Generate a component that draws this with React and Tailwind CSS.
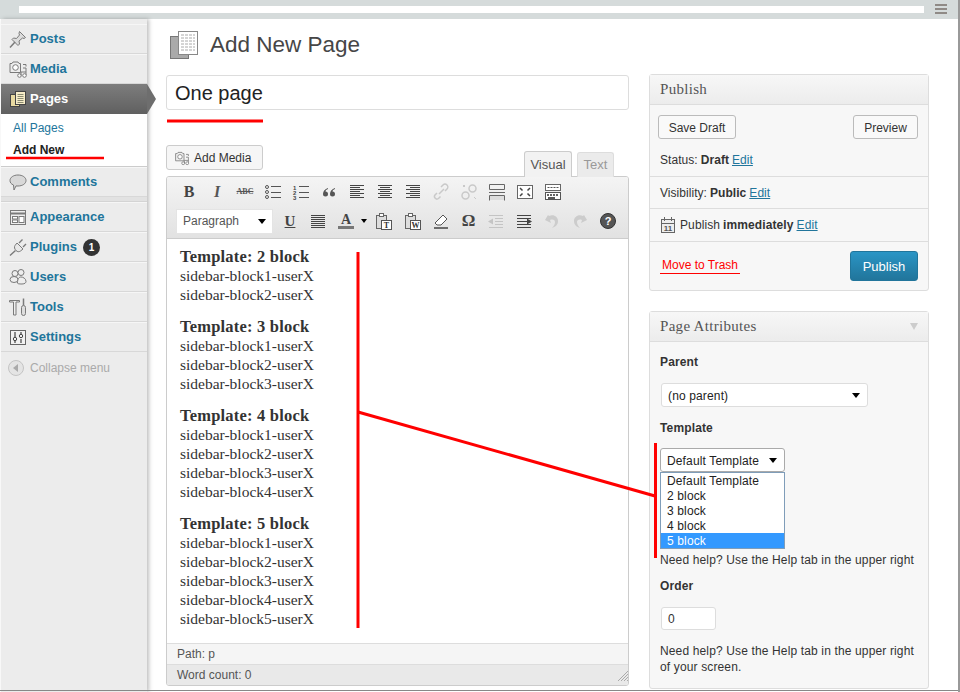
const sans = "font-['Liberation_Sans',Arial,sans-serif]"

function Glyph({ size = 20, children, className = "" }) {
  return (
    <svg width={size} height={size} viewBox="0 0 20 20" fill="none" className={`shrink-0 ${className}`}>
      {children}
    </svg>
  )
}

const gray = "#7a7a7a"

const PinIcon = () => (
  <Glyph>
    <path d="M11.500 2.500l6 6-1.500 1-1.500-.5-3.500 3 .5 3-1.500 1.500-6-6L5.500 9l3 .5 3-3.500-.5-1.500z" fill="#dcdcdc" stroke={gray} />
    <path d="M7 13l-5 5.500" stroke={gray} strokeWidth="1.500" />
  </Glyph>
)

const MediaIcon = ({ size = 20 }) => (
  <Glyph size={size}>
    <path d="M2 4.500h2l1-1.500h5l1 1.500h1.500v9H2z" fill="#eee" stroke={gray} />
    <circle cx="7.500" cy="8.500" r="2.800" fill="#fff" stroke={gray} />
    <path d="M15 5.500h3v2M15 9h3M18 9v7" stroke={gray} />
    <circle cx="11.500" cy="16.500" r="1.800" fill="#fff" stroke={gray} />
    <circle cx="16.500" cy="16.500" r="1.800" fill="#fff" stroke={gray} />
    <path d="M13 16.500V13h5" stroke={gray} />
  </Glyph>
)

const PagesIcon = () => (
  <Glyph>
    <rect x="2.500" y="5.500" width="9" height="12" fill="#e8d9a0" stroke="#444" />
    <rect x="7.500" y="2.500" width="10" height="13" fill="#f7edc8" stroke="#444" />
    <path d="M9.500 5.500h6M9.500 7.500h6M9.500 9.500h6M9.500 11.500h6M9.500 13.500h6" stroke="#8a8a70" />
  </Glyph>
)

const CommentIcon = () => (
  <Glyph>
    <path d="M10 3c4.500 0 8 2.300 8 5.500S14.500 14 10 14c-.8 0-1.300 0-2-.1L6 18l-.5-5C3 12 2 10.500 2 8.500 2 5.300 5.500 3 10 3z" fill="#d8d8d8" stroke={gray} />
  </Glyph>
)

const AppearanceIcon = () => (
  <Glyph>
    <rect x="2.500" y="3.500" width="15" height="14" fill="#eee" stroke={gray} />
    <path d="M2.500 6.500h15" stroke={gray} strokeWidth="2" />
    <rect x="4.500" y="9.500" width="5" height="2.500" fill="#fff" stroke={gray} />
    <rect x="4.500" y="13" width="5" height="2.500" fill="#fff" stroke={gray} />
    <rect x="11" y="9.500" width="5" height="6" fill="#fff" stroke={gray} />
  </Glyph>
)

const PluginsIcon = () => (
  <Glyph>
    <path d="M9 6l6 6-2.500 2c-1.500 1-3 1-4.500-.5S6 10 7 8.500z" fill="#e8e8e8" stroke={gray} />
    <path d="M11 6l3.500-3.500M15 10l3-3M7.500 13.500L2 18.500" stroke={gray} strokeWidth="1.400" />
  </Glyph>
)

const UsersIcon = () => (
  <Glyph>
    <circle cx="7" cy="6.500" r="3" fill="#eee" stroke={gray} />
    <circle cx="13" cy="5.500" r="3" fill="#eee" stroke={gray} />
    <ellipse cx="6" cy="12.500" rx="4" ry="3" fill="#eee" stroke={gray} />
    <path d="M9.500 16c0-4 1.500-6 3.500-6s5 1.500 5 4.500c0 1-1 2.500-4 2.500s-4.500-.2-4.500-1z" fill="#eee" stroke={gray} />
  </Glyph>
)

const ToolsIcon = () => (
  <Glyph>
    <path d="M1.500 3.500h10v1.500h-3.500v13h-2.500V5h-4z" fill="#eee" stroke={gray} />
    <path d="M15.500 1.500v7" stroke={gray} strokeWidth="1.500" />
    <rect x="13.500" y="8.500" width="4" height="10" rx="2" fill="#ddd" stroke={gray} />
  </Glyph>
)

const SettingsIcon = () => (
  <Glyph>
    <rect x="2.500" y="3.500" width="15" height="14" fill="#f2f2f2" stroke="#666" />
    <path d="M7 5v5M13 5v2M13 12v4M7 14v2" stroke="#444" strokeWidth="1.200" />
    <circle cx="7" cy="12" r="1.700" stroke="#444" />
    <circle cx="13" cy="9" r="1.700" stroke="#444" />
  </Glyph>
)

const menuTop = [
  { label: "Posts", icon: <PinIcon /> },
  { label: "Media", icon: <MediaIcon /> },
]

const menuBottom = [
  { label: "Appearance", icon: <AppearanceIcon /> },
  { label: "Plugins", icon: <PluginsIcon />, badge: "1" },
  { label: "Users", icon: <UsersIcon /> },
  { label: "Tools", icon: <ToolsIcon /> },
  { label: "Settings", icon: <SettingsIcon /> },
]

function MenuItem({ label, icon, badge }) {
  return (
    <div className="h-[30px] flex items-center pl-[7px] gap-[2px] border-b border-b-[#d8d8d8] border-t border-t-[#f6f6f6]">
      {icon}
      <span className="text-[13px] font-bold text-[#21759b]">{label}</span>
      {badge && (
        <span className="w-[17px] h-[17px] ml-[4px] rounded-full bg-[#333] text-white text-[10px] font-bold flex items-center justify-center">{badge}</span>
      )}
    </div>
  )
}

function Sidebar() {
  return (
    <aside className="w-[146px] shrink-0 ml-px bg-[#ececec] shadow-[2px_0_4px_rgba(0,0,0,0.25)] flex flex-col relative">
      <div className="h-[5px]" />
      {menuTop.map((m) => <MenuItem key={m.label} {...m} />)}
      <div className="h-[30px] flex items-center pl-[7px] gap-[2px] bg-gradient-to-b from-[#7d7d7d] to-[#606060] relative">
        <PagesIcon />
        <span className="text-[13px] font-bold text-white">Pages</span>
        <span className="absolute right-[-9px] top-0 w-0 h-0 border-y-[15px] border-y-transparent border-l-[9px] border-l-[#6e6e6e]" />
      </div>
      <div className="h-[53px] bg-white pl-[12px] pt-[6px] flex flex-col gap-[5px] text-[12px] leading-[17px] border-b border-[#ccc]">
        <span className="text-[#21759b]">All Pages</span>
        <span className="font-bold text-[#222]">Add New</span>
      </div>
      <MenuItem label="Comments" icon={<CommentIcon />} />
      <div className="h-[5px] border-b border-[#d4d4d4] bg-[#e2e2e2]" />
      {menuBottom.map((m) => <MenuItem key={m.label} {...m} />)}
      <div className="h-[31px] flex items-center pl-[7px] gap-[5px]">
        <span className="w-[16px] h-[16px] rounded-full bg-[#e4e4e4] border border-[#c4c4c4] flex items-center justify-center">
          <span className="w-0 h-0 border-y-[4px] border-y-transparent border-r-[5px] border-r-[#aaa] mr-px" />
        </span>
        <span className="text-[12px] text-[#aaa] ml-px">Collapse menu</span>
      </div>
    </aside>
  )
}

const tool = "#555"

function AlignIcon({ kind }) {
  const rows = [14, 10, 14, 10, 14, 10, 14]
  return (
    <Glyph>
      {rows.map((w, i) => {
        const x = kind === "left" ? 3 : kind === "center" ? 10 - w / 2 : 17 - w
        return <path key={i} d={`M${x} ${3.500 + i * 2}h${w}`} stroke="#444" />
      })}
    </Glyph>
  )
}

const toolbarRow1 = [
  <span key="b" className="font-['Liberation_Serif',serif] font-bold text-[16px] text-[#444]">B</span>,
  <span key="i" className="font-['Liberation_Serif',serif] italic font-bold text-[16px] text-[#555]">I</span>,
  <span key="abc" className="font-['Liberation_Serif',serif] font-bold text-[8px] text-[#555] line-through">ABC</span>,
  <Glyph key="ul"><circle cx="4" cy="5" r="1.500" stroke={tool} /><circle cx="4" cy="10" r="1.500" stroke={tool} /><circle cx="4" cy="15" r="1.500" stroke={tool} /><path d="M8 4.500h10M8 10.500h10M8 15.500h10" stroke={tool} /></Glyph>,
  <Glyph key="ol"><text x="2" y="8" fontSize="6" fontWeight="bold" fill="#444">1</text><text x="2" y="13" fontSize="6" fontWeight="bold" fill="#444">2</text><text x="2" y="18" fontSize="6" fontWeight="bold" fill="#444">3</text><path d="M8 4.500h10M8 10.500h10M8 15.500h10" stroke={tool} /></Glyph>,
  <Glyph key="q"><path d="M9 6C6 7 4 9 4 12a2.500 2.500 0 1 0 2.500-2.500c0-1 1-2 2.500-2.500zM16 6c-3 1-5 3-5 6a2.500 2.500 0 1 0 2.500-2.500c0-1 1-2 2.500-2.500z" fill="#555" /></Glyph>,
  <AlignIcon key="l" kind="left" />,
  <AlignIcon key="c" kind="center" />,
  <AlignIcon key="r" kind="right" />,
  <Glyph key="link"><path d="M8 12l5-5M6 11l-2 2a2.500 2.500 0 0 0 3.500 3.500l2-2M10 5l2-2a2.500 2.500 0 0 1 4 4l-2 2" stroke="#c9c9c9" strokeWidth="1.500" /></Glyph>,
  <Glyph key="unlink"><circle cx="13.500" cy="6.500" r="3.500" stroke="#c9c9c9" strokeWidth="1.500" /><circle cx="6.500" cy="13.500" r="3.500" stroke="#c9c9c9" strokeWidth="1.500" /><path d="M4 3l2 2M6 3L4 5M15 15l2 2" stroke="#c9c9c9" /></Glyph>,
  <Glyph key="more"><path d="M2.500 2.500h15v5h-15zM2 10.500h16M2.500 13.500h15v5M2.500 13.500v5" stroke="#666" /><rect x="3" y="14" width="14" height="4" fill="#ddd" /></Glyph>,
  <Glyph key="full"><rect x="2.500" y="3.500" width="15" height="13" fill="#fff" stroke="#666" /><path d="M5 6l2.500 2.500M15 6l-2.500 2.500M5 14l2.500-2.500M15 14l-2.500-2.500" stroke="#444" strokeWidth="1.500" /></Glyph>,
  <Glyph key="kitchen"><rect x="2.500" y="2.500" width="15" height="6" fill="#fff" stroke="#666" /><path d="M4.500 5.500h11" stroke="#555" strokeDasharray="2 1" /><rect x="2.500" y="10.500" width="15" height="7" fill="#fff" stroke="#555" /><path d="M4 13h12" stroke="#333" strokeWidth="1.500" strokeDasharray="2 1" /><path d="M5 16h7" stroke="#222" strokeWidth="1.500" /></Glyph>,
]

const Caret = ({ className = "border-x-[4px] border-t-[5px]" }) => (
  <span className={`w-0 h-0 border-x-transparent border-t-black ${className}`} />
)

function Cell({ children, w = "w-[28px]", className = "" }) {
  return <span className={`${w} h-[24px] shrink-0 flex items-center justify-center ${className}`}>{children}</span>
}

function Toolbar() {
  return (
    <div className="h-[62px] bg-gradient-to-b from-[#f4f4f4] to-[#e2e2e2] border-b border-[#ccc] pl-[8px] pt-[3px]">
      <div className="flex h-[24px]">
        {toolbarRow1.map((t, i) => <Cell key={i}>{t}</Cell>)}
      </div>
      <div className="flex items-center h-[26px] mt-[4px]">
        <div className="w-[97px] h-[25px] ml-px bg-white border border-[#e4e4e4] flex items-center justify-between px-[6px] text-[12px] text-[#555]">
          Paragraph <Caret />
        </div>
        <Cell className="ml-[3px]"><span className="font-['Liberation_Serif',serif] font-bold text-[15px] underline text-[#444]">U</span></Cell>
        <Cell><Glyph><path d="M3 4.500h14M3 6.500h14M3 8.500h14M3 10.500h14M3 12.500h14M3 14.500h14M3 16.500h14" stroke="#444" /></Glyph></Cell>
        <Cell>
          <span className="flex flex-col items-center w-[16px]">
            <span className="font-['Liberation_Serif',serif] font-bold text-[14px] leading-[13px] text-[#444]">A</span>
            <span className="w-[16px] h-[3px] bg-[#777]" />
          </span>
        </Cell>
        <Cell w="w-[11px]" className="-ml-[2px]"><Caret className="border-x-[3px] border-t-[4px]" /></Cell>
        <Cell w="w-[30px]"><PasteIcon letter="T" /></Cell>
        <Cell><PasteIcon letter="W" /></Cell>
        <Cell><Glyph><path d="M4 12l8-8 4 4-6 6H6z" fill="#fff" stroke="#555" /><path d="M3 17h14" stroke="#444" strokeWidth="1.500" /></Glyph></Cell>
        <Cell w="w-[27px]"><span className="font-['Liberation_Serif',serif] font-bold text-[17px] text-[#444]">Ω</span></Cell>
        <Cell><IndentIcon color="#c4c4c4" dir="left" /></Cell>
        <Cell><IndentIcon color="#444" dir="right" /></Cell>
        <Cell><Glyph><path d="M7 5c5-2 9 1 9 5s-3 6-6 7c2-2 3-4 3-6s-2-3-5-2l1 3-6-3 3-5z" fill="#ccc" /></Glyph></Cell>
        <Cell><Glyph><path d="M13 5c-5-2-9 1-9 5s3 6 6 7c-2-2-3-4-3-6s2-3 5-2l-1 3 6-3-3-5z" fill="#ccc" /></Glyph></Cell>
        <Cell><span className="w-[16px] h-[16px] rounded-full bg-[#555] border border-[#333] text-white text-[11px] font-bold flex items-center justify-center">?</span></Cell>
      </div>
    </div>
  )
}

const PasteIcon = ({ letter }) => (
  <Glyph>
    <rect x="2.500" y="4.500" width="10" height="13" fill="#ddd" stroke="#666" />
    <rect x="5.500" y="2.500" width="4" height="3" fill="#fff" stroke="#666" />
    <rect x="7.500" y="9.500" width="10" height="9" fill="#fff" stroke="#555" />
    <text x="12.500" y="17" fontSize="8" fontWeight="bold" textAnchor="middle" fill="#333" fontFamily="Liberation Serif">{letter}</text>
  </Glyph>
)

const IndentIcon = ({ color, dir }) => (
  <Glyph>
    <path d="M3 4.500h14M9 7.500h8M9 10.500h8M9 13.500h8M3 16.500h14" stroke={color} />
    <path d={dir === "left" ? "M2 10.500l5-3v6z" : "M18 10.500l-5-3v6z"} fill={color} />
    {dir === "right" && <path d="M3 7.500h8M3 10.500h8M3 13.500h8" stroke={color} />}
  </Glyph>
)

const templates = [
  { title: "Template: 2 block", n: 2 },
  { title: "Template: 3 block", n: 3 },
  { title: "Template: 4 block", n: 4 },
  { title: "Template: 5 block", n: 5 },
]

function EditorBody() {
  return (
    <div className="h-[404px] bg-white pl-[13px] pt-[8px] font-['Liberation_Serif',serif] text-[15.5px] leading-[19px] text-[#333] flex flex-col gap-[13px]">
      {templates.map((t) => (
        <div key={t.n}>
          <p className="font-bold text-[16.5px] tracking-[0.2px]">{t.title}</p>
          {Array.from({ length: t.n }, (_, i) => (
            <p key={i}>sidebar-block{i + 1}-userX</p>
          ))}
        </div>
      ))}
    </div>
  )
}

function Editor() {
  return (
    <div className="mt-[35px]">
      <div className="flex items-end justify-between h-[31px]">
        <div className="w-[97px] h-[25px] mb-[6px] rounded-[3px] border border-[#ccc] bg-[#f6f6f6] flex items-center pl-[7px] gap-[3px] text-[12px] text-[#333]">
          <MediaIcon size={16} />
          <span className="ml-px">Add Media</span>
        </div>
        <div className="flex items-end gap-[5px] mr-[15px] text-[13px] translate-y-px">
          <div className="w-[48px] h-[26px] rounded-t-[3px] border border-b-0 border-[#ccc] bg-[#f2f2f2] flex items-center justify-center text-[#555]">Visual</div>
          <div className="w-[37px] h-[25px] rounded-t-[3px] border border-b-0 border-[#ddd] bg-[#ebebeb] flex items-center justify-center text-[#999]">Text</div>
        </div>
      </div>
      <div className="border border-[#ccc] rounded-[3px] overflow-hidden">
        <Toolbar />
        <EditorBody />
        <div className="h-[21px] bg-[#f5f5f5] border-t border-[#ddd] pl-[10px] flex items-center text-[12px] text-[#555]">Path: p</div>
        <div className="h-[21px] bg-[#e9e9e9] border-t border-[#ddd] pl-[10px] flex items-center justify-between text-[12px] text-[#555]">
          Word count: 0
          <svg width="11" height="11" viewBox="0 0 11 11">
            <path d="M11 1L1 11M11 4L4 11M11 7L7 11M11 10L10 11" stroke="#aaa" />
          </svg>
        </div>
      </div>
    </div>
  )
}

const PostboxHead = ({ title, caret }) => (
  <div className="h-[30px] border-b border-[#ddd] bg-gradient-to-b from-[#f7f7f7] to-[#ececec] flex items-center justify-between pl-[10px] pr-[10px] font-['Liberation_Serif',serif] text-[15px] tracking-[0.3px] text-[#555]">
    {title}
    {caret && <span className="w-0 h-0 border-x-[4px] border-x-transparent border-t-[7px] border-t-[#ccc]" />}
  </div>
)

const Edit = () => <span className="text-[#21759b] underline">Edit</span>

function PublishBox() {
  return (
    <div className="border border-[#ddd] rounded-[3px] bg-[#f7f7f7] text-[12px] text-[#333]">
      <PostboxHead title="Publish" />
      <div className="flex justify-between pl-[8px] pr-[10px] pt-[10px]">
        <span className="w-[78px] h-[24px] pt-px rounded-[3px] border border-[#bbb] bg-[#f9f9f9] flex items-center justify-center">Save Draft</span>
        <span className="w-[65px] h-[24px] pt-px rounded-[3px] border border-[#bbb] bg-[#f9f9f9] flex items-center justify-center">Preview</span>
      </div>
      <div className="h-[38px] flex items-center pl-[10px] pt-[5px] border-b border-[#ddd] gap-[3px] tracking-[0.05px]">
        Status: <b>Draft</b> <Edit />
      </div>
      <div className="h-[32px] flex items-center pl-[10px] border-b border-[#ddd] gap-[3px] tracking-[0.05px]">
        Visibility: <b>Public</b> <Edit />
      </div>
      <div className="h-[33px] flex items-center pl-[10px] border-b border-[#ddd] gap-[3px] tracking-[0.1px]">
        <svg width="16" height="17" viewBox="0 0 16 17" className="mr-[1px]">
          <rect x="1.500" y="2.500" width="13" height="13" fill="#eee" stroke="#666" />
          <path d="M4.500 0v4M11.500 0v4M1 6.500h14" stroke="#666" />
          <text x="8" y="14" fontSize="8" fontWeight="bold" textAnchor="middle" fill="#555">11</text>
        </svg>
        Publish <b>immediately</b> <Edit />
      </div>
      <div className="h-[48px] flex items-center justify-between pl-[12px] pr-[10px]">
        <span className="text-[#f00] -translate-y-px">Move to Trash</span>
        <span className="w-[68px] h-[30px] pt-px rounded-[3px] border border-[#21759b] bg-gradient-to-b from-[#2a95c5] to-[#21759b] text-white text-[13px] flex items-center justify-center">Publish</span>
      </div>
    </div>
  )
}

function SelectBox({ children, className = "" }) {
  return (
    <div className={`h-[24px] flex items-center justify-between bg-white rounded-[3px] pl-[6px] pr-[7px] text-[12px] text-[#222] ${className}`}>
      <span className="pt-[2px]">{children}</span>
      <Caret />
    </div>
  )
}

const options = ["Default Template", "2 block", "3 block", "4 block", "5 block"]

function AttributesBox() {
  return (
    <div className="mt-[20px] border border-[#ddd] rounded-[3px] bg-[#f7f7f7] text-[12px] text-[#333] tracking-[0.14px]">
      <PostboxHead title="Page Attributes" caret />
      <div className="pl-[10px] pr-[10px]">
        <p className="font-bold mt-[13px] leading-[14px]">Parent</p>
        <SelectBox className="w-[207px] ml-px mt-[14px] border border-[#ddd]">(no parent)</SelectBox>
        <p className="font-bold mt-[14px] leading-[14px]">Template</p>
        <SelectBox className="w-[125px] mt-[13px] border border-[#aaa]">Default Template</SelectBox>
        <div className="w-[125px] border border-[#7f9db9] bg-white text-[#222]">
          {options.map((o, i) => (
            <div key={o} className={`h-[15px] leading-[17px] pl-[6px] ${i === 4 ? "bg-[#3399ff] text-white" : ""}`}>{o}</div>
          ))}
        </div>
        <p className="leading-[16px] mt-[3px] whitespace-nowrap">Need help? Use the Help tab in the upper right</p>
        <p className="font-bold mt-[11px] leading-[14px]">Order</p>
        <div className="w-[55px] h-[23px] ml-px mt-[14px] bg-white border border-[#ddd] rounded-[3px] pl-[6px] flex items-center">0</div>
        <p className="leading-[16px] mt-[13px]">Need help? Use the Help tab in the upper right of your screen.</p>
      </div>
      <div className="h-[13px]" />
    </div>
  )
}

// red marker lines drawn by hand on top of the screenshot
function Annotations() {
  return (
    <svg width="960" height="692" className="absolute inset-0 pointer-events-none">
      <path d="M167 121H263" stroke="#f00" strokeWidth="3" />
      <path d="M6 158H104" stroke="#f00" strokeWidth="2.500" />
      <path d="M358 252V628" stroke="#f00" strokeWidth="3" />
      <path d="M358 412L655 496" stroke="#f00" strokeWidth="3" />
      <path d="M655.500 443V558" stroke="#f00" strokeWidth="3" />
      <path d="M660 273.500H740" stroke="#f00" strokeWidth="1" />
    </svg>
  )
}

export default function App() {
  return (
    <div className={`relative w-[960px] h-[692px] overflow-hidden bg-white flex flex-col border-r-2 border-[#999] ${sans}`}>
      <div className="h-[19px] shrink-0 bg-[#d5dbdb] flex items-center pl-[19px] pr-[11px] gap-[11px] pb-px">
        <div className="flex-1 h-[7px] bg-white" />
        <div className="w-[12px] h-[10px] flex flex-col justify-between">
          <span className="h-[2px] bg-[#8f8a86]" />
          <span className="h-[2px] bg-[#8f8a86]" />
          <span className="h-[2px] bg-[#8f8a86]" />
        </div>
      </div>
      <div className="flex flex-1 min-h-0">
        <Sidebar />
        <main className="flex-1 flex gap-[20px] pl-[19px] pt-[9px]">
          <div className="w-[463px]">
            <div className="h-[34px] flex items-center pl-[3px] gap-[11px] text-[22.5px] text-[#464646]">
              <svg width="30" height="32" viewBox="0 0 30 32">
                <rect x="1.500" y="7.500" width="18" height="22" fill="#aaa" stroke="#777" />
                <rect x="9.500" y="2.500" width="19" height="23" fill="#fff" stroke="#888" />
                <path d="M12 6h14M12 9h14M12 12h14M12 15h14M12 18h14M12 21h14" stroke="#aaa" strokeDasharray="3 1" />
              </svg>
              Add New Page
            </div>
            <div className="h-[35px] mt-[13px] border border-[#ddd] rounded-[3px] flex items-center pl-[8px] text-[20px] text-[#222]">One page</div>
            <Editor />
          </div>
          <div className="w-[280px] mt-[46px]">
            <PublishBox />
            <AttributesBox />
          </div>
        </main>
      </div>
      <div className="absolute left-0 right-0 bottom-px h-px bg-[#888]" />
      <Annotations />
    </div>
  )
}
